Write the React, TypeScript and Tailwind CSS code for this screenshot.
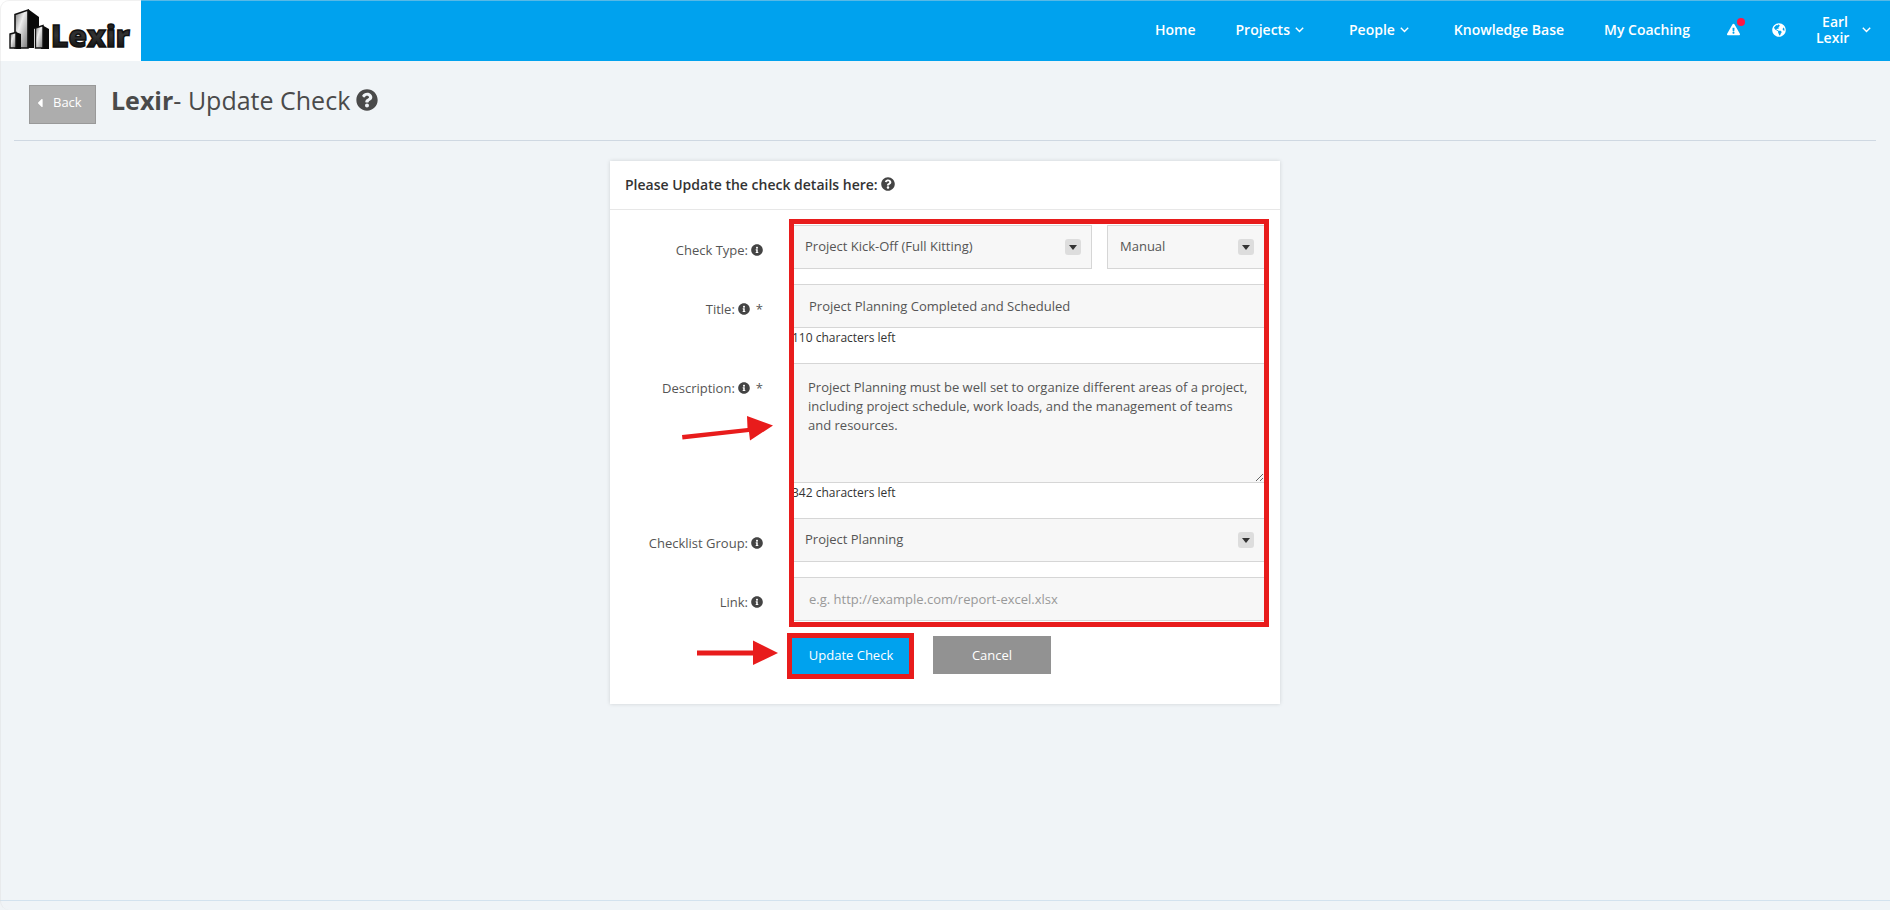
import type { ReactNode } from 'react';
import {
  FaCaretLeft,
  FaExclamationTriangle,
  FaGlobeAmericas,
  FaInfoCircle,
  FaQuestionCircle,
} from 'react-icons/fa';

const fieldClass =
  'block h-[44px] w-full border border-[#d6d6d6] bg-[#f7f7f7] px-4 text-[13px] text-[#555] placeholder:text-[#999]';

function Chevron() {
  return (
    <svg width="9" height="6" viewBox="0 0 9 6" fill="none" aria-hidden="true">
      <path d="M0.8 0.8 L4.5 4.5 L8.2 0.8" stroke="currentColor" strokeWidth="1.4" />
    </svg>
  );
}

function Logo() {
  return (
    <svg width="141" height="61" viewBox="0 0 141 61" role="img" aria-label="Lexir">
      <defs>
        <linearGradient id="glass" x1="0" y1="0" x2="1" y2="1">
          <stop offset="0" stopColor="#777" />
          <stop offset="0.4" stopColor="#eee" />
          <stop offset="1" stopColor="#777" />
        </linearGradient>
        <linearGradient id="ink" x1="0" y1="0" x2="0" y2="1">
          <stop offset="0" stopColor="#111" />
          <stop offset="0.5" stopColor="#333" />
          <stop offset="1" stopColor="#000" />
        </linearGradient>
      </defs>
      <path d="M28 9 L39 17 V27 L34 29 V48 H27 Z" fill="#0a0a0a" />
      <path d="M15 14.500 L28 10 V48 H15 Z" fill="url(#glass)" stroke="#111" strokeWidth="1.600" />
      <path d="M42 25 L49 29 V49 H41 Z" fill="#0a0a0a" />
      <path d="M35.500 28 L43 25.500 V48 H35.500 Z" fill="url(#glass)" stroke="#111" strokeWidth="1.400" />
      <path d="M16 32 L21 34 V49 H16 Z" fill="#0a0a0a" />
      <path d="M10 34 L16 32.500 V48 H10 Z" fill="url(#glass)" stroke="#111" strokeWidth="1.400" />
      <text
        x="51"
        y="47"
        fill="url(#ink)"
        stroke="#111"
        strokeWidth="1.500"
        className="font-['Open_Sans',sans-serif] text-[30px] font-extrabold"
      >
        Lexir
      </text>
    </svg>
  );
}

function NavLink({ label, menu = false }: { label: string; menu?: boolean }) {
  return (
    <a href="#" className={menu ? 'mr-[5px] flex items-center gap-[5px]' : ''}>
      {label}
      {menu && <Chevron />}
    </a>
  );
}

function Header() {
  return (
    <header className="flex h-[61px] items-center justify-between bg-[#00a2ee] text-white">
      <a href="#" className="bg-white">
        <Logo />
      </a>
      <nav className="flex items-center pb-[2px] pr-[19px] text-[14px] font-semibold">
        <div className="flex items-center gap-10">
          <NavLink label="Home" />
          <NavLink label="Projects" menu />
          <NavLink label="People" menu />
          <NavLink label="Knowledge Base" />
          <NavLink label="My Coaching" />
        </div>
        <button type="button" aria-label="Alerts" className="relative ml-[37px]">
          <FaExclamationTriangle size={13} />
          <span className="absolute -right-[5px] -top-[5px] size-2 rounded-full bg-[#ff1744]" />
        </button>
        <button type="button" aria-label="Language" className="ml-8">
          <FaGlobeAmericas size={14} />
        </button>
        <button type="button" className="ml-[30px] flex items-center gap-[14px]">
          <span className="w-8 text-right leading-4">Earl Lexir</span>
          <Chevron />
        </button>
      </nav>
    </header>
  );
}

interface RowProps {
  id: string;
  label: string;
  required?: boolean;
  children: ReactNode;
}

function Row({ id, label, required = false, children }: RowProps) {
  return (
    <div className="grid grid-cols-[138px_1fr] gap-[29px]">
      <label
        htmlFor={id}
        className="flex h-fit items-center justify-end pt-4 text-[13px] leading-[18px] text-[#555]"
      >
        {label}
        <FaInfoCircle size={12} className="ml-[3px] text-[#444]" />
        {required && <span className="ml-[6px]">*</span>}
      </label>
      <div>{children}</div>
    </div>
  );
}

interface SelectProps {
  id: string;
  options: string[];
  label?: string;
}

function Select({ id, options, label }: SelectProps) {
  return (
    <div className="relative">
      <select
        id={id}
        aria-label={label}
        className="block h-[44px] w-full appearance-none border border-[#d6d6d6] bg-[#f7f7f7] px-3 text-[13px] text-[#555]"
      >
        {options.map((option) => (
          <option key={option}>{option}</option>
        ))}
      </select>
      <span className="pointer-events-none absolute right-[11px] top-[14px] flex size-4 items-center justify-center rounded-[3px] bg-[#ddd]">
        <svg width="8" height="5" viewBox="0 0 8 5" aria-hidden="true">
          <path d="M0 0 H8 L4 5 Z" fill="#333" />
        </svg>
      </span>
    </div>
  );
}

function CheckForm() {
  return (
    <form
      className="relative mx-auto w-full max-w-[670px] bg-white pb-[30px] shadow-[0_0_4px_rgba(0,0,0,0.14)]"
      onSubmit={(e) => e.preventDefault()}
    >
      <h2 className="flex h-[49px] items-center gap-[3px] border-b border-[#e7e7e7] px-[15px] pb-[2px] text-[14px] font-semibold text-[#333]">
        Please Update the check details here:
        <FaQuestionCircle size={14} className="text-[#444]" />
      </h2>

      <div className="relative mt-[15px] flex flex-col gap-[15px] px-[15px]">
        <Row id="check-type" label="Check Type:">
          <div className="grid grid-cols-[300px_1fr] gap-[15px]">
            <Select id="check-type" options={['Project Kick-Off (Full Kitting)']} />
            <Select id="check-mode" label="Check mode" options={['Manual']} />
          </div>
        </Row>
        <Row id="title" label="Title:" required>
          <input
            id="title"
            type="text"
            defaultValue="Project Planning Completed and Scheduled"
            className={fieldClass}
          />
          <p className="h-5 text-[12px] leading-5 text-[#333]">110 characters left</p>
        </Row>
        <Row id="description" label="Description:" required>
          <textarea
            id="description"
            defaultValue="Project Planning must be well set to organize different areas of a project, including project schedule, work loads, and the management of teams and resources."
            className="block h-[120px] w-full resize border border-[#d6d6d6] bg-[#f7f7f7] px-[15px] py-[14px] text-[13px] leading-[19px] text-[#555]"
          />
          <p className="h-5 text-[12px] leading-5 text-[#333]">342 characters left</p>
        </Row>
        <Row id="group" label="Checklist Group:">
          <Select id="group" options={['Project Planning']} />
        </Row>
        <Row id="link" label="Link:">
          <input
            id="link"
            type="text"
            placeholder="e.g. http://example.com/report-excel.xlsx"
            className={fieldClass}
          />
        </Row>
        <div className="pointer-events-none absolute -bottom-[6px] -top-[6px] left-[179px] right-[11px] border-5 border-[#e81c1c]" />
        <svg
          className="absolute left-[70px] top-[188px]"
          width="96"
          height="28"
          viewBox="0 0 96 28"
          aria-hidden="true"
        >
          <path d="M2 22 L67.500 15 L67 3 L93 12.500 L70 27.500 L69 19 L2.500 26.500 Z" fill="#e81c1c" />
        </svg>
      </div>

      <div className="relative mt-[15px] flex gap-[23px] pl-[182px]">
        <div className="relative">
          <button
            type="submit"
            className="h-[38px] w-[118px] bg-[#00a2ee] pt-[2px] text-[13px] text-white"
          >
            Update Check
          </button>
          <div className="pointer-events-none absolute -bottom-[5px] -left-[5px] -right-[4px] -top-[3px] border-5 border-[#e81c1c]" />
        </div>
        <button
          type="button"
          className="h-[38px] w-[118px] bg-[#929292] pt-[2px] text-[13px] text-white"
        >
          Cancel
        </button>
        <svg
          className="absolute left-[86px] top-1"
          width="84"
          height="26"
          viewBox="0 0 84 26"
          aria-hidden="true"
        >
          <path d="M1 10.500 H57 V0.500 L82 13 L57 25 V15.500 H1 Z" fill="#e81c1c" />
        </svg>
      </div>
    </form>
  );
}

export default function App() {
  return (
    <div className="relative flex min-h-screen flex-col bg-[#f0f4f7] font-['Open_Sans',sans-serif]">
      <Header />
      <main className="grow px-[14px]">
        <div className="mb-5 flex h-20 items-start gap-[15px] border-b border-[#cfd8e2] pl-[15px] pt-6">
          <button
            type="button"
            className="flex h-[39px] w-[67px] items-center gap-[6px] border border-[#999] bg-[#adadad] px-[3px] pb-1 text-[13px] text-white"
          >
            <FaCaretLeft size={14} />
            Back
          </button>
          <h1 className="flex items-center gap-[6px] text-[25px] leading-[30px] text-[#4a4a4a]">
            <span>
              <b>Lexir</b>- Update Check
            </span>
            <FaQuestionCircle size={22} />
          </h1>
        </div>
        <CheckForm />
      </main>
      <footer className="h-[10px] border-t border-[#d3e2ee]" />
      <div className="pointer-events-none absolute inset-0 rounded-l-[9px] border-l border-t border-[#dcdcdc]/40" />
    </div>
  );
}
